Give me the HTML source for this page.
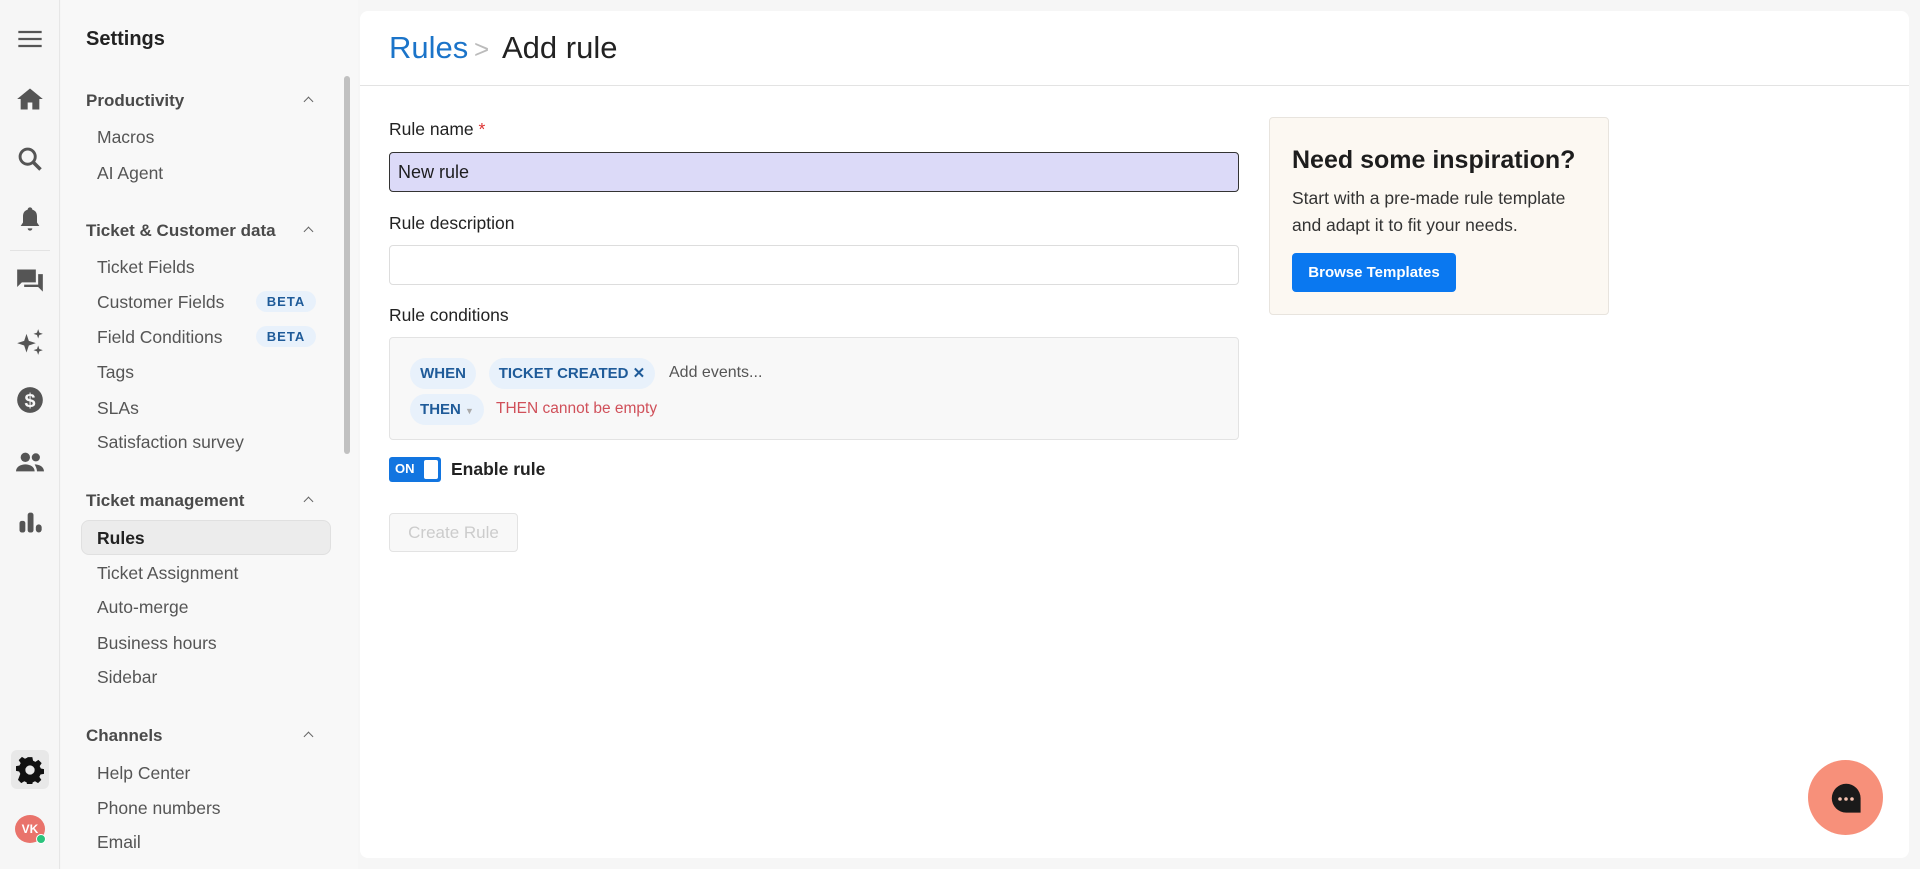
<!DOCTYPE html>
<html><head><meta charset="utf-8"><style>
*{box-sizing:border-box;margin:0;padding:0}
body{width:1920px;height:869px;background:#f6f6f6;font-family:"Liberation Sans",sans-serif;position:relative;overflow:hidden;color:#1d1d1f}
.rail{position:absolute;left:0;top:0;width:60px;height:869px;background:#f6f6f6;border-right:1px solid #e6e6e6}
.ic{position:absolute;left:16px;width:28px;height:28px}
.side{position:absolute;left:61px;top:0;width:297px;height:869px;background:#f8f8f8}
.side h1{position:absolute;left:25px;top:28px;font-size:20px;font-weight:bold;color:#222}
.sh{position:absolute;left:25px;font-size:17px;font-weight:bold;color:#4a4a4a}
.sh:after{content:"";position:absolute;left:219px;top:7px;width:6px;height:6px;border-left:1.5px solid #666;border-top:1.5px solid #666;transform:rotate(45deg)}
.si{position:absolute;left:36px;font-size:17.5px;color:#555}
.beta{position:absolute;left:195px;width:60px;height:21px;border-radius:11px;background:#e8f1fb;color:#1f5b99;font-size:13px;font-weight:bold;letter-spacing:1px;text-align:center;line-height:21px}
.sel{position:absolute;left:20px;top:520px;width:250px;height:35px;background:#ececec;border:1px solid #e0e0e0;border-radius:8px}
.sb{position:absolute;left:344px;top:76px;width:6px;height:378px;background:#c1c1c1;border-radius:3px}
.main{position:absolute;left:360px;top:11px;width:1549px;height:847px;background:#fff;border-radius:8px}
.hdr{position:absolute;left:0;top:0;width:100%;height:75px;border-bottom:1px solid #e3e3e3}
.hdr span{position:absolute;top:19px;font-size:31px}
.lbl{position:absolute;left:29px;font-size:17.5px;color:#222}
.inp{position:absolute;left:29px;width:850px;height:40px;border:1px solid #ddd;border-radius:4px;background:#fff}
.chip{position:absolute;height:31px;border-radius:16px;background:#e8f1fb;color:#1f5b99;font-size:15px;font-weight:bold;line-height:31px;text-align:center}
</style></head><body>
<div class="rail">
<svg class="ic" style="top:25px" viewBox="0 0 24 24"><path d="M2 6h20M2 12h20M2 18h20" stroke="#555" stroke-width="2"/></svg>
<svg class="ic" style="top:85px" viewBox="0 0 24 24"><path d="M12 3L1 12h3v9h6v-6h4v6h6v-9h3z" fill="#555"/></svg>
<svg class="ic" style="top:145px" viewBox="0 0 24 24"><circle cx="10" cy="10" r="6.5" stroke="#555" stroke-width="2.5" fill="none"/><path d="M15 15l6 6" stroke="#555" stroke-width="3"/></svg>
<svg class="ic" style="top:205px" viewBox="0 0 24 24"><path d="M12 2a2 2 0 0 1 2 2c3 1 4 3 4 6v5l2 3H4l2-3v-5c0-3 1-5 4-6a2 2 0 0 1 2-2zM10 20h4a2 2 0 0 1-4 0z" fill="#555"/></svg>
<div style="position:absolute;left:10px;top:250px;width:40px;height:1px;background:#e3e3e3"></div>
<svg class="ic" style="top:266px" viewBox="0 0 24 24"><path d="M1 3h16v11H5l-4 4zM19 7h4v15l-4-4H7v-2h12z" fill="#555"/></svg>
<svg class="ic" style="top:328px" viewBox="0 0 24 24"><path d="M9 5l2 6 6 2-6 2-2 6-2-6-6-2 6-2zM19 1l1 3 3 1-3 1-1 3-1-3-3-1 3-1zM19 15l1 3 3 1-3 1-1 3-1-3-3-1 3-1z" fill="#555"/></svg>
<svg class="ic" style="top:386px" viewBox="0 0 24 24"><circle cx="12" cy="12" r="11" fill="#555"/><text x="12" y="18" font-size="17" font-weight="bold" fill="#f6f6f6" text-anchor="middle" font-family="Liberation Sans">$</text></svg>
<svg class="ic" style="top:448px" viewBox="0 0 24 24"><circle cx="8" cy="8" r="4" fill="#555"/><circle cx="17" cy="8" r="3.5" fill="#555"/><path d="M0 20c0-4 4-6 8-6s8 2 8 6zM16 14c4 0 8 2 8 6h-6c0-2-1-4-2-6z" fill="#555"/></svg>
<svg class="ic" style="top:508px" viewBox="0 0 24 24"><rect x="3" y="11" width="5" height="10" rx="2" fill="#555"/><rect x="10" y="4" width="5" height="17" rx="2" fill="#555"/><rect x="17" y="14" width="5" height="7" rx="2.5" fill="#555"/></svg>
<div style="position:absolute;left:11px;top:750px;width:38px;height:39px;background:#e8e8e8;border-radius:6px"></div>
<svg class="ic" style="top:756px" viewBox="0 0 24 24"><path d="M12 8a4 4 0 1 0 0 8 4 4 0 0 0 0-8zm-2-7h4l.6 3 2 1 2.6-1.7 2.8 2.8L20.3 8.7l1 2 2.7.6v4l-3 .6-1 2 1.7 2.6-2.8 2.8-2.6-1.7-2 1-.6 3h-4l-.6-3-2-1-2.6 1.7-2.8-2.8L3.7 15.3l-1-2L0 12.7v-4l3-.6 1-2L2.3 3.5l2.8-2.8 2.6 1.7 2-1z" fill="#111"/></svg>
<div style="position:absolute;left:15px;top:815px;width:30px;height:28px;border-radius:50%;background:#e9736b;color:#fff;font-size:12px;font-weight:bold;text-align:center;line-height:28px">VK</div>
<div style="position:absolute;left:36px;top:834px;width:10px;height:10px;border-radius:50%;background:#2ac37c;border:1.5px solid #fff"></div>
</div>
<div class="side">
<h1>Settings</h1>
<div class="sh" style="top:91px">Productivity</div>
<div class="si" style="top:127px">Macros</div>
<div class="si" style="top:163px">AI Agent</div>
<div class="sh" style="top:221px">Ticket &amp; Customer data</div>
<div class="si" style="top:257px">Ticket Fields</div>
<div class="si" style="top:292px">Customer Fields</div><div class="beta" style="top:291px">BETA</div>
<div class="si" style="top:327px">Field Conditions</div><div class="beta" style="top:326px">BETA</div>
<div class="si" style="top:362px">Tags</div>
<div class="si" style="top:398px">SLAs</div>
<div class="si" style="top:432px">Satisfaction survey</div>
<div class="sh" style="top:491px">Ticket management</div>
<div class="sel"></div>
<div class="si" style="top:528px;color:#222;font-weight:bold">Rules</div>
<div class="si" style="top:563px">Ticket Assignment</div>
<div class="si" style="top:597px">Auto-merge</div>
<div class="si" style="top:633px">Business hours</div>
<div class="si" style="top:667px">Sidebar</div>
<div class="sh" style="top:726px">Channels</div>
<div class="si" style="top:763px">Help Center</div>
<div class="si" style="top:798px">Phone numbers</div>
<div class="si" style="top:832px">Email</div>
</div>
<div class="sb"></div>
<div class="main">
<div class="hdr"><span style="left:29px;color:#1b74c9">Rules</span><span style="left:114px;color:#bbb;font-size:26px;top:23px">&gt;</span><span style="left:142px;color:#222">Add rule</span></div>
<div class="lbl" style="top:108px">Rule name <span style="color:#d33">*</span></div>
<div class="inp" style="top:141px;background:#dcdaf8;border-color:#333;font-size:18px;padding:9px 0 0 8px">New rule</div>
<div class="lbl" style="top:202px">Rule description</div>
<div class="inp" style="top:234px"></div>
<div class="lbl" style="top:294px">Rule conditions</div>
<div class="inp" style="top:326px;height:103px;background:#f8f8f8;border-color:#e3e3e3"></div>
<div class="chip" style="left:50px;top:347px;width:66px">WHEN</div>
<div class="chip" style="left:129px;top:347px;width:166px">TICKET CREATED ✕</div>
<div style="position:absolute;left:309px;top:353px;font-size:16px;color:#555">Add events...</div>
<div class="chip" style="left:50px;top:383px;width:74px">THEN <span style="font-size:9px;color:#aaa">▼</span></div>
<div style="position:absolute;left:136px;top:389px;font-size:15.5px;color:#d0505a">THEN cannot be empty</div>
<div style="position:absolute;left:29px;top:446px;width:52px;height:25px;background:#1275e0;border-radius:3px"><span style="position:absolute;left:6px;top:4px;color:#fff;font-size:13px;font-weight:bold">ON</span><div style="position:absolute;right:3px;top:3px;width:14px;height:19px;background:#fff;border-radius:2px"></div></div>
<div style="position:absolute;left:91px;top:448px;font-size:17.5px;font-weight:bold;color:#222">Enable rule</div>
<div style="position:absolute;left:29px;top:502px;width:129px;height:39px;border:1px solid #e3e3e3;border-radius:4px;background:#f8f8f8;color:#ccc;font-size:17px;text-align:center;line-height:37px">Create Rule</div>
<div style="position:absolute;left:909px;top:106px;width:340px;height:198px;background:#fcf8f2;border:1px solid #e8e4de;border-radius:4px">
<div style="position:absolute;left:22px;top:28px;font-size:25px;font-weight:bold;color:#1d1d1d">Need some inspiration?</div>
<div style="position:absolute;left:22px;top:67px;font-size:17.5px;line-height:27px;color:#333">Start with a pre-made rule template<br>and adapt it to fit your needs.</div>
<div style="position:absolute;left:22px;top:135px;width:164px;height:39px;background:#0a78f0;border-radius:4px;color:#fff;font-size:15px;font-weight:bold;text-align:center;line-height:39px">Browse Templates</div>
</div>
</div>
<div style="position:absolute;left:1808px;top:760px;width:75px;height:75px;border-radius:50%;background:#f7907a"></div>
<svg style="position:absolute;left:1828px;top:780px" width="36" height="36" viewBox="0 0 36 36"><path d="M18 2a16 16 0 1 0 0 32h16V18A16 16 0 0 0 18 2z" fill="#1a1a1a" transform="translate(2 2) scale(.9)"/><circle cx="12" cy="19" r="1.8" fill="#f7c2b0"/><circle cx="18" cy="19" r="1.8" fill="#f7c2b0"/><circle cx="24" cy="19" r="1.8" fill="#f7c2b0"/></svg>
</body></html>
